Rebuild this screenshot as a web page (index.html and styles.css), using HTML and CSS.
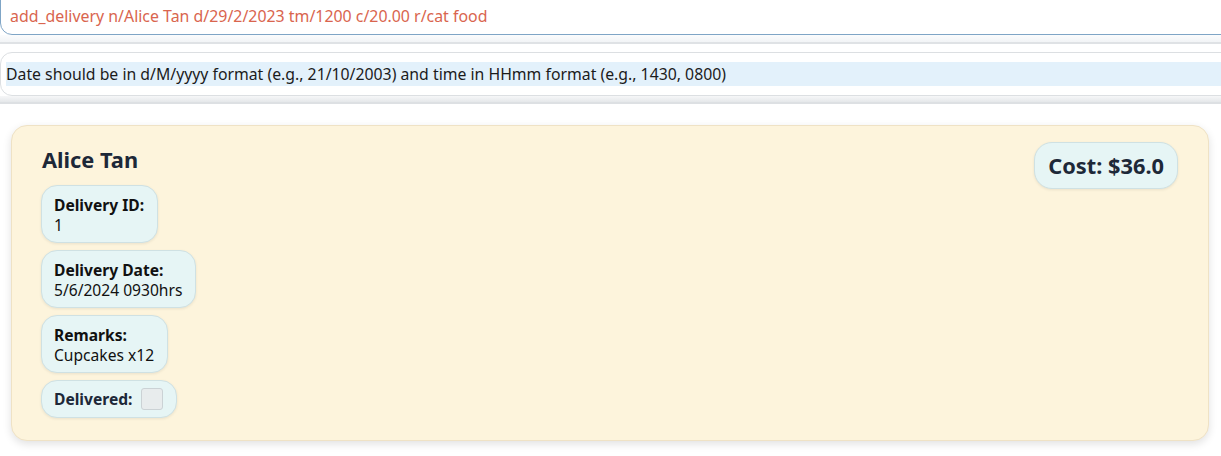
FILE: index.html
```html
<!DOCTYPE html>
<html>
<head>
<meta charset="utf-8">
<link rel="stylesheet" href="styles.css">
</head>
<body>
<div class="app">
  <div class="command">
    <div class="command-text">add_delivery n/Alice Tan d/29/2/2023 tm/1200 c/20.00 r/cat food</div>
  </div>
  <div class="band"></div>
  <div class="result">
    <div class="result-text">Date should be in d/M/yyyy format (e.g., 21/10/2003) and time in HHmm format (e.g., 1430, 0800)</div>
  </div>
  <div class="band band-bottom"></div>
  <div class="list">
    <div class="card">
      <div class="card-main">
        <div class="name">Alice Tan</div>
        <div class="pill">
          <div class="label">Delivery ID:</div>
          <div class="value">1</div>
        </div>
        <div class="pill">
          <div class="label">Delivery Date:</div>
          <div class="value">5/6/2024 0930hrs</div>
        </div>
        <div class="pill">
          <div class="label">Remarks:</div>
          <div class="value">Cupcakes x12</div>
        </div>
        <div class="pill pill-row">
          <div class="label">Delivered:</div>
          <div class="checkbox"></div>
        </div>
      </div>
      <div class="cost">Cost: $36.0</div>
    </div>
  </div>
</div>
</body>
</html>
```

FILE: styles.css
```css
html, body {
  margin: 0;
  padding: 0;
  background: #ffffff;
  overflow: hidden;
}
body {
  font-family: "Noto Sans", "Open Sans", sans-serif;
  width: 1221px;
  height: 456px;
}
.app {
  display: flex;
  flex-direction: column;
}
.command {
  margin-top: -14px;
  height: 49px;
  width: 1240px;
  box-sizing: border-box;
  border: 1px solid #7fa5c6;
  border-radius: 12px;
  background: #ffffff;
  display: flex;
  align-items: flex-end;
  padding: 0 0 8px 9px;
}
.command-text {
  color: #d9654e;
  font-size: 15.9px;
  line-height: 20px;
  white-space: nowrap;
}
.band {
  height: 7px;
  background: linear-gradient(#fbfcfd, #f2f4f6);
  border-bottom: 2px solid #dfe2e5;
  margin-bottom: 8px;
}
.result {
  height: 44px;
  width: 1240px;
  box-sizing: border-box;
  border: 1px solid #dcdfe2;
  border-radius: 12px;
  background: #ffffff;
  padding: 9px 0 0 5px;
}
.result-text {
  background: #e3f1fb;
  height: 24px;
  line-height: 24px;
  font-size: 15.8px;
  color: #1b1b1b;
  white-space: nowrap;
}
.band-bottom {
  height: 6px;
  background: linear-gradient(#f6f7f8, #e5e8ea);
  border-bottom: 2px solid #dde0e3;
  margin-bottom: 0;
}
.list {
  padding: 21px 12px 0 11px;
}
.card {
  box-sizing: border-box;
  height: 316px;
  background: #fdf4dc;
  border: 1px solid #efe2c5;
  border-radius: 16px;
  box-shadow: 0 3px 8px rgba(0, 0, 0, 0.12);
  display: flex;
  justify-content: space-between;
  align-items: flex-start;
  padding: 16px 30px 0 29px;
}
.card-main {
  display: flex;
  flex-direction: column;
  align-items: flex-start;
  gap: 7px;
}
.name {
  font-size: 21.8px;
  font-weight: 700;
  color: #1d2838;
  line-height: 36px;
  margin-left: 1px;
}
.pill {
  box-sizing: border-box;
  background: #e6f5f5;
  border: 1px solid #cfe1e3;
  border-radius: 16px;
  box-shadow: 0 1px 3px rgba(0, 0, 0, 0.08);
  padding: 9px 13px 7px 12px;
  font-size: 15.6px;
  color: #111111;
}
.label {
  font-weight: 700;
  line-height: 20px;
}
.value {
  line-height: 20px;
}
.pill-row {
  display: flex;
  align-items: center;
  gap: 9px;
  padding: 7px 13px 7px 12px;
}
.pill-row .label {
  color: #1d2838;
}
.checkbox {
  width: 22px;
  height: 22px;
  box-sizing: border-box;
  background: #e8eced;
  border: 1px solid #cbd2d5;
  border-radius: 3px;
}
.cost {
  margin-top: 0;
  box-sizing: border-box;
  height: 47px;
  background: #e6f5f5;
  border: 1px solid #cfe1e3;
  border-radius: 18px;
  box-shadow: 0 1px 3px rgba(0, 0, 0, 0.08);
  padding: 0 13px;
  display: flex;
  align-items: center;
  font-size: 21.8px;
  font-weight: 700;
  color: #1d2838;
}
```
